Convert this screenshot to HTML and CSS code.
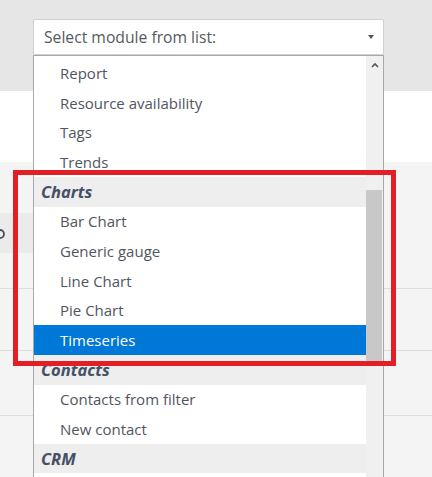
FILE: index.html
```html
<!DOCTYPE html>
<html lang="en">
<head>
<meta charset="utf-8">
<title>Select module</title>
<link rel="stylesheet" href="styles.css">
</head>
<body>
<div class="page">
  <div class="topbar"></div>
  <div class="whiteband"></div>
  <div class="content">
    <div class="row row-first">
      <div class="searchbox">
        <svg class="search-icon" width="12" height="12" viewBox="0 0 12 12"><circle cx="4" cy="5" r="4" fill="none" stroke="#4a4f58" stroke-width="1.8"/></svg>
      </div>
    </div>
    <div class="row row-2"></div>
    <div class="row row-3"></div>
    <div class="row row-4"></div>
  </div>

  <div class="picker">
    <div class="select">
      <span class="select-label">Select module from list:</span>
      <span class="caret"></span>
    </div>
    <div class="list">
      <div class="options">
        <div class="opt">Report</div>
        <div class="opt">Resource availability</div>
        <div class="opt">Tags</div>
        <div class="opt">Trends</div>
        <div class="group">Charts</div>
        <div class="opt">Bar Chart</div>
        <div class="opt">Generic gauge</div>
        <div class="opt">Line Chart</div>
        <div class="opt">Pie Chart</div>
        <div class="opt selected">Timeseries</div>
        <div class="group">Contacts</div>
        <div class="opt">Contacts from filter</div>
        <div class="opt">New contact</div>
        <div class="group">CRM</div>
        <div class="opt"></div>
      </div>
      <div class="scrollbar">
        <div class="sb-arrow">
          <svg width="8" height="6" viewBox="0 0 8 6"><path d="M1 5 L4 2 L7 5" fill="none" stroke="#555" stroke-width="1.6"/></svg>
        </div>
        <div class="sb-track"><div class="sb-thumb"></div></div>
      </div>
    </div>
  </div>

  <div class="highlight"></div>
</div>
</body>
</html>
```

FILE: styles.css
```css
html, body {
  margin: 0;
  padding: 0;
}
body {
  width: 432px;
  height: 477px;
  overflow: hidden;
  font-family: "Open Sans", "Noto Sans", "DejaVu Sans", sans-serif;
  background: #f4f4f4;
}
.page {
  position: relative;
  width: 432px;
  height: 477px;
  overflow: hidden;
}
.topbar {
  height: 91px;
  background: #e6e6e6;
}
.whiteband {
  height: 71px;
  background: #ffffff;
}
.content {
  background: #f4f4f4;
}
.row {
  border-bottom: 1px solid #dddddd;
  box-sizing: border-box;
}
.row-first {
  height: 127px;
  padding-top: 51px;
}
.row-2 { height: 62px; }
.row-3 { height: 65px; }
.row-4 { height: 62px; border-bottom: none; }
.searchbox {
  width: 40px;
  height: 40px;
  background: #ebebeb;
  position: relative;
}
.search-icon {
  position: absolute;
  left: -4px;
  top: 16px;
}

.picker {
  position: absolute;
  left: 33px;
  top: 19px;
  width: 351px;
}
.select {
  height: 36px;
  box-sizing: border-box;
  border: 1px solid #d0d0d0;
  border-radius: 2px;
  background: #ffffff;
  display: flex;
  align-items: center;
  padding: 0 10px;
  justify-content: space-between;
}
.select-label {
  font-size: 15.7px;
  color: #555a60;
}
.caret {
  width: 0;
  height: 0;
  border-left: 3.5px solid transparent;
  border-right: 3.5px solid transparent;
  border-top: 4px solid #555;
  margin-right: -1px;
}
.list {
  display: flex;
  border: 1px solid #a8a8a8;
  border-bottom: none;
  background: #ffffff;
  height: 440px;
  overflow: hidden;
}
.options {
  flex: 1;
  padding-top: 2.3px;
}
.opt, .group {
  height: 29.67px;
  display: flex;
  align-items: center;
  font-size: 15px;
  white-space: nowrap;
}
.opt {
  padding-left: 26px;
  color: #4f5662;
}
.group {
  padding-left: 7px;
  background: #eeeeee;
  font-weight: bold;
  font-style: italic;
  font-size: 16.5px;
  color: #465064;
}
.opt.selected {
  background: #0078d7;
  color: #ffffff;
}
.scrollbar {
  width: 17px;
  background: #f0f0f0;
  display: flex;
  flex-direction: column;
}
.sb-arrow {
  height: 17px;
  display: flex;
  align-items: center;
  justify-content: center;
}
.sb-track {
  flex: 1;
  padding-top: 117px;
}
.sb-thumb {
  margin: 0 1px 0 0;
  height: 172px;
  background: #c8c8c8;
}

.highlight {
  position: absolute;
  left: 13px;
  top: 170px;
  width: 383px;
  height: 196px;
  box-sizing: border-box;
  border: 5px solid #e31e25;
}
```
